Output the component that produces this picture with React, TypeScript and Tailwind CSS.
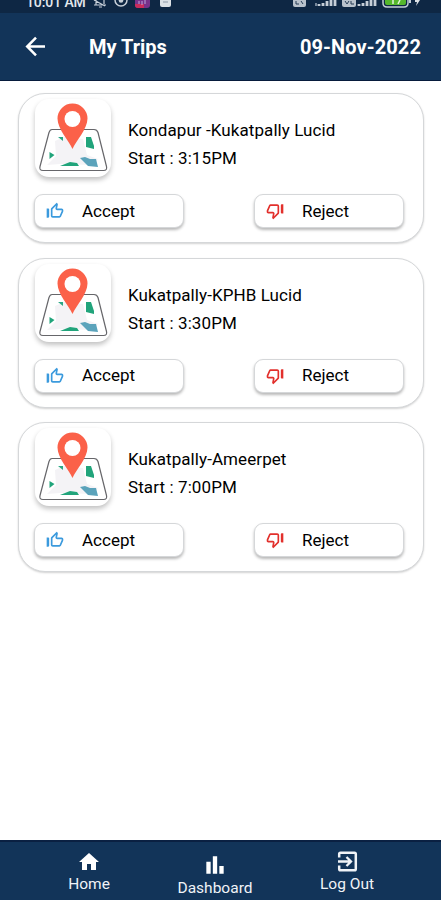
import React from "react";
import { MdBarChart, MdHome, MdThumbDownOffAlt, MdThumbUpOffAlt } from "react-icons/md";

const trips = [
  { route: "Kondapur -Kukatpally Lucid", start: "3:15PM" },
  { route: "Kukatpally-KPHB Lucid", start: "3:30PM" },
  { route: "Kukatpally-Ameerpet", start: "7:00PM" },
];

export default function App() {
  return (
    <div className="flex flex-col w-[441px] h-[900px] overflow-hidden bg-white font-['Roboto',sans-serif]">
      <StatusBar />
      <header className="flex items-center shrink-0 h-[68px] pl-[22px] pr-5 bg-[#123459] border-b border-[#071b3c] text-white">
        <BackArrow />
        <h1 className="ml-10 text-[20px] font-bold">My Trips</h1>
        <div className="ml-auto text-[20px] font-bold tracking-[0.1px]">09-Nov-2022</div>
      </header>

      <main className="flex flex-col flex-1 gap-[14.5px] pt-3 pl-[18px] pr-[17px]">
        {trips.map((trip) => (
          <TripCard key={trip.route} route={trip.route} start={trip.start} />
        ))}
      </main>

      <nav className="flex shrink-0 h-[60px] pl-[23px] pr-[31px] bg-[#123459] border-t-2 border-[#0a2042] text-[#f0f3f7]">
        <NavItem className="pt-2 pl-[3px]" label="Home" icon={<MdHome className="size-6 text-white" />} />
        <NavItem className="pt-[10px]" label="Dashboard" icon={<MdBarChart className="size-[26px] text-white" />} />
        <NavItem className="pt-[7px] pl-1.5" label="Log Out" icon={<ExitIcon />} />
      </nav>
    </div>
  );
}

function StatusBar() {
  return (
    <div className="flex items-end shrink-0 h-[13px] pl-[26px] pr-[19px] overflow-hidden bg-[#0e2744] text-[#e3e8ee]">
      <div className="text-[14px] leading-[20px] font-medium tracking-[-0.1px] mb-px">10:01 AM</div>
      <svg className="ml-[7px] shrink-0" width="78" height="13" viewBox="0 0 78 13" fill="none">
        <path d="M1 5h12M3 5V0M11 4V0M1 0l11 6M6 7h3" stroke="#c8d0d9" strokeWidth="1.2" />
        <path d="M22 0a6 6 0 0 0 12 0" stroke="#c8d0d9" strokeWidth="1.5" />
        <circle cx="28" cy="0.5" r="2.3" fill="#c8d0d9" />
        <path d="M42 0h15v5q0 3-3 3h-9q-3 0-3-3z" fill="#77318a" />
        <path d="M42 4h9v4h-6q-3 0-3-3z" fill="#c92c5c" />
        <path d="M46 4V1M49 5V1M52 4V0" stroke="#bfa8dc" />
        <path d="M67 0h11v5q0 2-2 2h-7q-2 0-2-2z" fill="#dce1e6" />
        <path d="M70 2h5" stroke="#8d99a7" />
      </svg>
      <svg className="ml-auto shrink-0" width="130" height="13" viewBox="0 0 130 13" fill="none">
        <path d="M1 0h13v5q0 2-2 2H3q-2 0-2-2z" fill="#b9c2cc" />
        <path d="M4 1v3h3M9 1l2 3" stroke="#243b55" />
        <path d="M23 6h2V3h-2z" fill="#75869a" />
        <path d="M29 6V4M33 6V3M37 6V1M41 6V0M45 6V0" transform="translate(-2)" stroke="#c5ced8" strokeWidth="2.8" />
        <path d="M50 0h14v5q0 2-2 2H52q-2 0-2-2z" fill="#b9c2cc" />
        <path d="M53 1l2 3 2-3M59 1v3h3" stroke="#243b55" />
        <path d="M68 6V4M72 6V3M76 6V1M80 6V0M84 6V0" transform="translate(-1)" stroke="#c5ced8" strokeWidth="2.8" />
        <path d="M91 0v3q0 4 4 4h17q4 0 4-4V0" stroke="#c5ced8" strokeWidth="1.5" />
        <path d="M93 0h21v3q0 2-2 2H95q-2 0-2-2z" fill="#55b72c" />
        <path d="M101 4V0M106 4l2-4" stroke="#e0f2d9" strokeWidth="1.5" />
        <path d="M117 0h2v3h-2z" fill="#c5ced8" />
        <path d="M123 0h5l-4 6 1-4h-2z" fill="#dce1e6" />
      </svg>
    </div>
  );
}

function TripCard(props: Readonly<{ route: string; start: string }>) {
  return (
    <section className="h-[150px] shrink-0 pt-[5px] px-[15px] rounded-[27px] border border-[#d5d7d9] bg-white shadow-[0_1px_2px_rgba(0,0,0,0.18)]">
      <div className="flex">
        <div className="ml-px w-[76px] h-[78px] shrink-0 rounded-[14px] bg-white shadow-[0_3px_5px_rgba(0,0,0,0.24)]">
          <MapPin />
        </div>
        <div className="ml-[17px] pt-[17px] text-[17px] leading-[28px] text-black">
          <div className="tracking-[0.08px] whitespace-nowrap">{props.route}</div>
          <div className="tracking-[0.1px]">Start : {props.start}</div>
        </div>
      </div>
      <div className="flex justify-between mt-[17px] pr-1">
        <ActionButton
          label="Accept"
          icon={<MdThumbUpOffAlt className="w-5 h-5 text-[#3b9add]" />}
        />
        <ActionButton
          label="Reject"
          icon={<MdThumbDownOffAlt className="w-5 h-5 text-[#e2302c]" />}
        />
      </div>
    </section>
  );
}

function ActionButton(props: Readonly<{ label: string; icon: React.ReactNode }>) {
  return (
    <button className="flex items-center w-[150px] h-[34px] pl-[10px] rounded-[9px] border border-[#d5d7d9] bg-white shadow-[0_2px_3px_rgba(0,0,0,0.28)]">
      {props.icon}
      <span className="ml-[17px] text-[17px] leading-none text-black">{props.label}</span>
    </button>
  );
}

function NavItem(props: Readonly<{ label: string; icon: React.ReactNode; className: string }>) {
  return (
    <div className={`flex flex-col items-center flex-1 ${props.className}`}>
      {props.icon}
      <span className="text-[15.5px] leading-[20px]">{props.label}</span>
    </div>
  );
}

function BackArrow() {
  return (
    <svg width="27" height="27" viewBox="0 0 27 27" fill="none" stroke="currentColor" strokeWidth="2.5">
      <path d="M23 13.500H5.500M14 4.700L5.200 13.500 14 22.300" />
    </svg>
  );
}

function ExitIcon() {
  return (
    <svg width="25" height="25" viewBox="0 0 25 25" fill="none" stroke="currentColor" strokeWidth="2.5">
      <path d="M4.200 8.500V5q0-1.300 1.300-1.300h14q1.300 0 1.300 1.300v15q0 1.300-1.300 1.300h-14Q4.200 21.300 4.200 20v-3.500" />
      <path d="M3 12.500h12.500M11.500 8l4.500 4.500-4.500 4.500" strokeWidth="2.300" />
    </svg>
  );
}

// Folded street map with a location marker standing on it
function MapPin() {
  return (
    <svg width="76" height="78" viewBox="0 0 76 78" fill="none">
      <path
        d="M17 30.500h42q3 0 4 3l8.500 34q1 4-3 4H8q-4 0-3-4l9-34q1-3 3-3z"
        fill="#fff"
        stroke="#66666a"
        strokeWidth="1.2"
      />
      <path d="M20 42l9-4 19 2 4 16 11 4-6 6-32-1-13 1 9-9z" fill="#f4f3f6" />
      <path d="M23 38h5v4z" fill="#2ba784" />
      <path d="M51 38h5l3 9v3l-8-2z" fill="#21a47b" />
      <path d="M14.500 53l5 3-5 4z" fill="#21a47b" />
      <path d="M25 67l10-4 7 1 2 3z" fill="#21a47b" />
      <path d="M45 59l5-1 5 2h6l2 8-10-1z" fill="#5ba3bb" />
      <path
        d="M37.500 50C34 42 22.500 30 22.500 19.500a15 15 0 0 1 30 0C52.500 30 41 42 37.500 50z"
        fill="#fb6149"
      />
      <circle cx="37.500" cy="20" r="8" fill="#fff" />
    </svg>
  );
}
